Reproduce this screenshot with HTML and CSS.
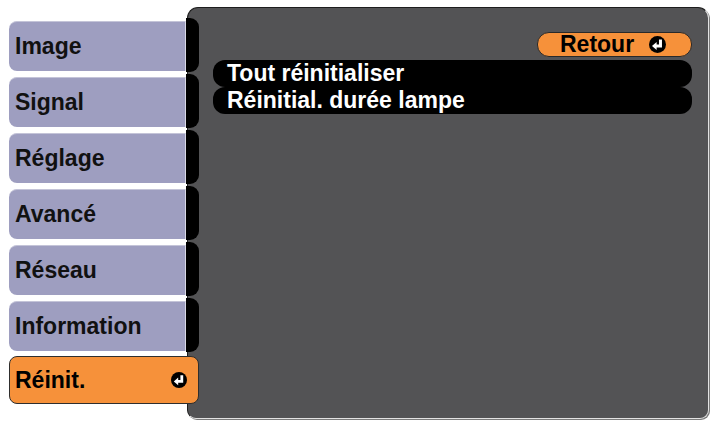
FILE: index.html
```html
<!DOCTYPE html>
<html lang="fr">
<head>
<meta charset="utf-8">
<title>Réinit.</title>
<link rel="stylesheet" href="styles.css">
</head>
<body>
<div class="screen">
  <nav class="tabs">
    <div class="tab"><span class="label">Image</span><span class="tab-end"></span></div>
    <div class="tab"><span class="label">Signal</span><span class="tab-end"></span></div>
    <div class="tab"><span class="label">Réglage</span><span class="tab-end"></span></div>
    <div class="tab"><span class="label">Avancé</span><span class="tab-end"></span></div>
    <div class="tab"><span class="label">Réseau</span><span class="tab-end"></span></div>
    <div class="tab"><span class="label">Information</span><span class="tab-end"></span></div>
    <div class="tab tab-active">
      <span class="label">Réinit.</span>
      <svg class="enter-icon" viewBox="0 0 16 16" width="16" height="16" aria-hidden="true">
        <circle cx="8" cy="8" r="8" fill="#000"/>
        <path d="M10.8 3.2 V9.4 H6.6" fill="none" stroke="#fff" stroke-width="2.8" stroke-linejoin="miter"/>
        <path d="M2.8 9.4 L7.2 5.6 L7.2 13.2 Z" fill="#fff"/>
      </svg>
    </div>
  </nav>
  <section class="panel">
    <div class="panel-head">
      <div class="back-btn">
        <span>Retour</span>
        <svg class="enter-icon" viewBox="0 0 16 16" width="17" height="17" aria-hidden="true">
          <circle cx="8" cy="8" r="8" fill="#000"/>
          <path d="M10.8 3.2 V9.4 H6.6" fill="none" stroke="#fff" stroke-width="2.8" stroke-linejoin="miter"/>
          <path d="M2.8 9.4 L7.2 5.6 L7.2 13.2 Z" fill="#fff"/>
        </svg>
      </div>
    </div>
    <ul class="items">
      <li class="item">Tout réinitialiser</li>
      <li class="item">Réinitial. durée lampe</li>
    </ul>
  </section>
</div>
</body>
</html>
```
FILE: styles.css
```css
html, body {
  margin: 0;
  padding: 0;
  background: #ffffff;
}

body {
  width: 712px;
  height: 423px;
  overflow: hidden;
  font-family: "Liberation Sans", Arial, sans-serif;
  font-weight: 700;
  font-size: 23px;
}

.screen {
  display: flex;
  align-items: flex-start;
  padding: 7px 0 0 9px;
}

.tabs {
  position: relative;
  z-index: 2;
  width: 190px;
  flex: none;
  display: flex;
  flex-direction: column;
  gap: 6px;
  margin-top: 14px;
}

.tab {
  display: flex;
  align-items: stretch;
  height: 50px;
}

.tab .label {
  flex: none;
  width: 177px;
  padding-left: 6px;
  display: flex;
  align-items: center;
  background: #9e9ec0;
  color: #111;
  border-radius: 8px 0 0 8px;
  border-top: 1px solid #c4c4d8;
  border-right: 1px solid #d8d8e6;
  box-sizing: border-box;
}

.tab-end {
  flex: none;
  width: 13px;
  margin-top: -3px;
  margin-bottom: -1px;
  background: #000;
  border-radius: 0 9px 9px 0;
}

.tab-active {
  height: 48px;
  margin-top: -1px;
  box-sizing: border-box;
  background: #f6913a;
  border: 1px solid #2e2e2e;
  border-radius: 8px;
  align-items: center;
  justify-content: space-between;
  padding: 0 11px 0 5px;
}

.tab-active .label {
  background: none;
  border: 0;
  width: auto;
  padding: 0;
  color: #000;
}

.enter-icon {
  display: block;
  flex: none;
}

.panel {
  position: relative;
  z-index: 1;
  flex: none;
  margin-left: -12px;
  width: 522px;
  height: 412px;
  box-sizing: border-box;
  background: #535355;
  border-top: 1px solid #1e1e1e;
  border-left: 1px solid #1e1e1e;
  border-right: 1px solid #e2e2e2;
  border-bottom: 1px solid #e2e2e2;
  box-shadow: 1px 1px 0 #7a7a7a;
  border-radius: 11px 11px 9px 9px;
  padding: 24px 16px 0 25px;
}

.panel-head {
  display: flex;
  justify-content: flex-end;
}

.back-btn {
  width: 155px;
  height: 25px;
  box-sizing: border-box;
  display: flex;
  align-items: center;
  gap: 15px;
  padding-left: 22px;
  background: #f6913a;
  border: 1px solid #2a2a2a;
  border-radius: 12px;
  color: #000;
  line-height: 1;
}

.items {
  list-style: none;
  margin: 3px 0 0;
  padding: 0;
}

.item {
  height: 27px;
  display: flex;
  align-items: center;
  padding-left: 14px;
  background: #000;
  color: #fff;
  border-radius: 12px;
  line-height: 1;
}
```
